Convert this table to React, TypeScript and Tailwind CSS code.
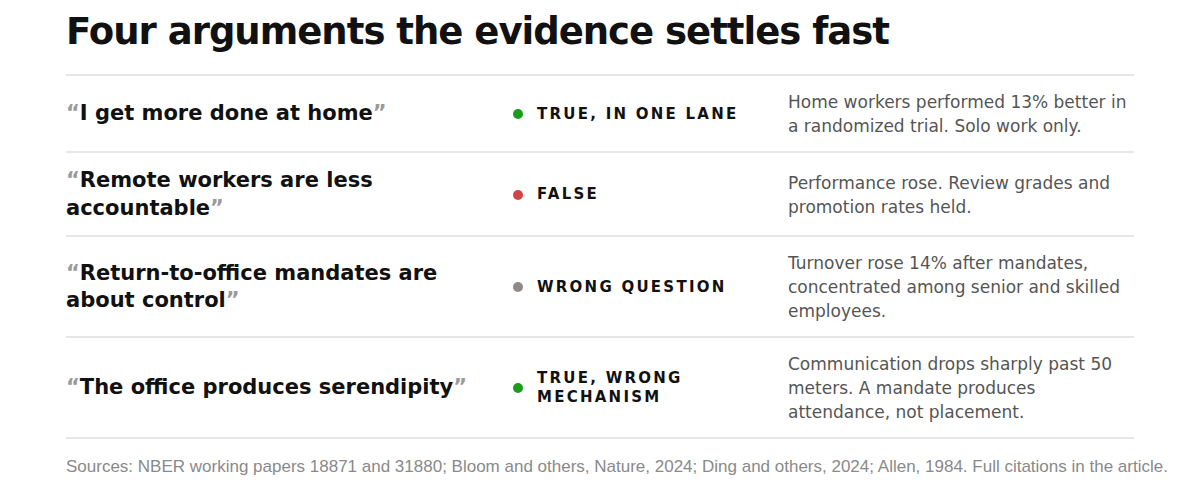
import React from "react";

type Row = {
  claim: string;
  verdict: string;
  dot: string;
  desc: string;
};

const rows: Row[] = [
  {
    claim: "I get more done at home",
    verdict: "TRUE, IN ONE LANE",
    dot: "bg-[#1a9e1a]",
    desc: "Home workers performed 13% better in a randomized trial. Solo work only.",
  },
  {
    claim: "Remote workers are less accountable",
    verdict: "FALSE",
    dot: "bg-[#d44343]",
    desc: "Performance rose. Review grades and promotion rates held.",
  },
  {
    claim: "Return-to-office mandates are about control",
    verdict: "WRONG QUESTION",
    dot: "bg-[#8f8a86]",
    desc: "Turnover rose 14% after mandates, concentrated among senior and skilled employees.",
  },
  {
    claim: "The office produces serendipity",
    verdict: "TRUE, WRONG MECHANISM",
    dot: "bg-[#1a9e1a]",
    desc: "Communication drops sharply past 50 meters. A mandate produces attendance, not placement.",
  },
];

export default function App() {
  return (
    <div className="w-[1200px] h-[495px] bg-white px-[66px] pt-[10px] font-['DejaVu_Sans',sans-serif] text-[#111]">
      <h1 className="text-[37px] leading-[44px] font-bold tracking-[-1px] pb-[20px] text-[#111]">
        Four arguments the evidence settles fast
      </h1>
      <div className="w-[1068px] border-t-2 border-[#e6e6e6]">
        {rows.map((r, i) => (
          <div
            key={i}
            className="grid grid-cols-[423px_251px_1fr] gap-x-[24px] items-center pt-[14px] pb-[13px] border-b-2 border-[#e6e6e6]"
          >
            <div className="text-[21px] leading-[27.5px] font-bold">
              <span className="text-[#9a9a9a]">“</span>
              {r.claim}
              <span className="text-[#9a9a9a]">”</span>
            </div>
            <div className="flex items-center gap-[14px]">
              <span className={`w-[10px] h-[10px] rounded-full shrink-0 ${r.dot}`} />
              <span className="text-[15px] leading-[19px] font-bold tracking-[0.15em]">
                {r.verdict}
              </span>
            </div>
            <div className="text-[17px] leading-[24px] text-[#555]">{r.desc}</div>
          </div>
        ))}
      </div>
      <div className="mt-[18px] whitespace-nowrap font-['Liberation_Sans',sans-serif] text-[17px] leading-[20px] text-[#8a8a8a]">
        Sources: NBER working papers 18871 and 31880; Bloom and others, Nature, 2024; Ding and others, 2024; Allen, 1984. Full citations in the article.
      </div>
    </div>
  );
}
